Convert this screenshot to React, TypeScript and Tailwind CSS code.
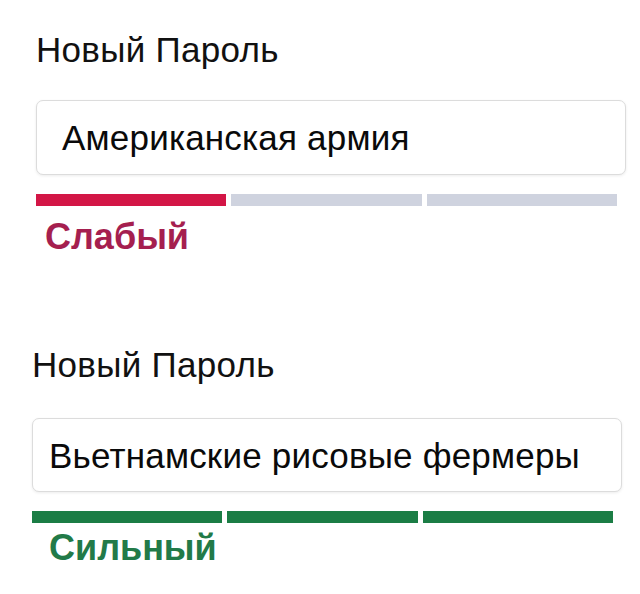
import React from "react";

type Strength = "weak" | "strong";

interface FieldProps {
    value: string;
    strength: Strength;
    className?: string;
    boxClass: string;
    statusClass: string;
}

const font = { fontFamily: '"Liberation Sans", Arial, sans-serif' };

function PasswordField({ value, strength, className, boxClass, statusClass }: FieldProps) {
    const weak = strength === "weak";
    const filled = weak ? 1 : 3;

    return (
        <div className={className}>
            <label className="block text-[35px] leading-[35px] tracking-[0.3px] text-[#111]">Новый Пароль</label>

            <div className={boxClass}>
                <span className="text-[35px] leading-[35px] tracking-[0.2px] text-[#0a0a0a]">{value}</span>
            </div>

            {/* strength meter */}
            <div className="mt-[19px] flex h-[12px] w-[581px] gap-[5px]">
                {[0, 1, 2].map((i) => (
                    <div
                        key={i}
                        className={
                            i < filled
                                ? weak
                                    ? "flex-1 bg-[#d31646]"
                                    : "flex-1 bg-[#1b7d45]"
                                : "flex-1 bg-[#cfd3df]"
                        }
                    />
                ))}
            </div>

            <div className={statusClass}>{weak ? "Слабый" : "Сильный"}</div>
        </div>
    );
}

export default function App() {
    return (
        <div className="h-[594px] w-[640px] overflow-hidden bg-white" style={font}>
            <PasswordField
                className="pl-[36px] pt-[32px]"
                boxClass="mt-[33px] flex h-[75px] w-[590px] items-center rounded-[7px] border border-[#dcdcdc] bg-white pl-[25px] shadow-[0_1px_3px_rgba(0,0,0,0.08)]"
                statusClass="mt-[13px] pl-[9px] text-[36px] font-bold leading-[36px] text-[#a51f4f]"
                value="Американская армия"
                strength="weak"
            />
            <PasswordField
                className="pl-[32px] pt-[92px]"
                boxClass="mt-[36px] flex h-[74px] w-[590px] items-center rounded-[7px] border border-[#dcdcdc] bg-white pl-[16px] shadow-[0_1px_3px_rgba(0,0,0,0.08)]"
                statusClass="mt-[7px] pl-[17px] text-[36px] font-bold leading-[36px] text-[#227a48]"
                value="Вьетнамские рисовые фермеры"
                strength="strong"
            />
        </div>
    );
}
